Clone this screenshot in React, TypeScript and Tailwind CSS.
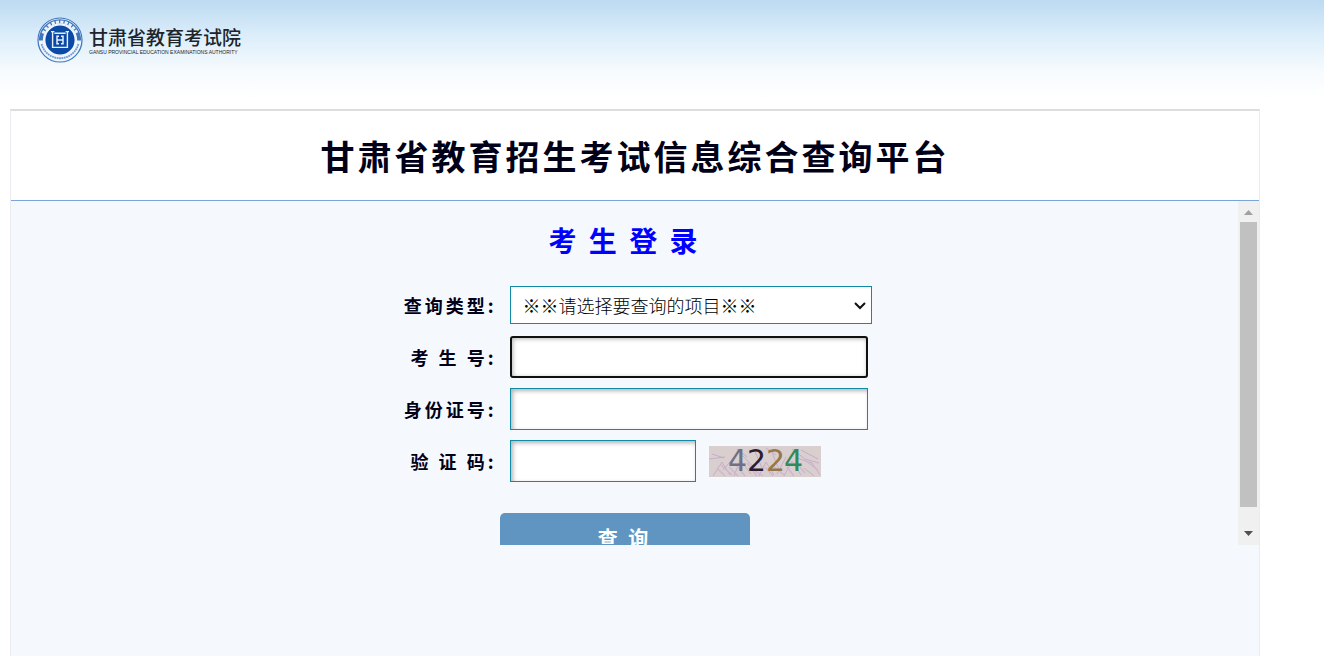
import { useState } from 'react';
import type { FormEvent, InputHTMLAttributes, ReactNode } from 'react';

const QUERY_TYPES = ['※※请选择要查询的项目※※'];

const CAPTCHA = [
  { ch: '4', x: 19, fill: '#6d7086' },
  { ch: '2', x: 38, fill: '#2e1b2d' },
  { ch: '2', x: 57, fill: '#94784c' },
  { ch: '4', x: 75, fill: '#2f8a5c' },
];

function Emblem() {
  return (
    <svg viewBox="0 0 46 46" className="h-[46px] w-[46px] shrink-0" aria-hidden="true">
      <circle cx="23" cy="23" r="22" fill="#eef5fc" stroke="#3f76bd" strokeWidth="1.2" />
      <path d="M3.8 23.5A19.2 19.2 0 1 1 42.2 23.5" fill="none" stroke="#3f76bd" strokeWidth="4" />
      <path d="M6 16.5A18.3 18.3 0 0 1 40 16.5" fill="none" stroke="#eaf2fb" strokeWidth="3" strokeDasharray="3.2 1.2" />
      <path d="M4.6 27A19 19 0 0 0 41.4 27" fill="none" stroke="#6f9bd2" strokeWidth="1.8" strokeDasharray="1.8 .6" />
      <circle cx="23" cy="23" r="15.2" fill="#0b4ba6" stroke="#f4f9fe" strokeWidth="1.2" />
      <path d="M15.6 14v16.4h14.8V14M14 14.6h3.4M28.6 14.6h3.4M17.4 16.2h11.2" fill="none" stroke="#e6effa" strokeWidth="1.4" />
      <path d="M20 18.6v8.8M26 18.6v8.8M20 23h6M20 19.2h2M26 19.2h-2M20 26.8h2M26 26.8h-2" fill="none" stroke="#e6effa" strokeWidth="1.5" />
    </svg>
  );
}

function Captcha() {
  return (
    <svg viewBox="0 0 112 31" className="h-[31px] w-28 overflow-visible" role="img" aria-label="4224">
      <rect width="112" height="31" fill="#dacfcf" />
      <path d="M0 13l16-2M3 8l12 4M4 30l9-14 8 13M14 24l12-14M25 30l6-16 11 14M34 10l14 15M45 3l8 19M50 30l7-14 8 13M62 4l9 22M68 28l9-17M75 30l8-15 9 14M83 3l13 10 14 4M88 12l15 5 8 12M92 4l17 9M95 22l10 8" fill="none" stroke="#c2a4c5" strokeWidth=".8" />
      <path d="M8 22l8 8M12 19l11 10M20 21l9 9M28 20l8 10M38 17l10 13M42 22l12 8M56 21l8 9M64 20l11 9M78 21l7 9M90 20l6 7M97 15l12 9M28 3l10 8M57 2l10 7" fill="none" stroke="#cdb6d0" strokeWidth="1.4" />
      {CAPTCHA.map((c) => (
        <text key={c.x} x={c.x} y="25" fill={c.fill} fontSize="30" className="font-['DejaVu_Sans']">{c.ch}</text>
      ))}
    </svg>
  );
}

function Row({ id, label, children }: { id: string; label: string; children: ReactNode }) {
  return (
    <div className="flex h-[42px] items-center gap-[13px]">
      <label htmlFor={id} className="w-[119px] shrink-0 text-right text-lg font-bold tracking-[3px] text-[#000018]">{label}</label>
      {children}
    </div>
  );
}

function TextBox({ className, ...props }: InputHTMLAttributes<HTMLInputElement>) {
  return (
    <input
      type="text"
      {...props}
      className={`h-[42px] border border-[#0f8ba5] bg-white px-3 text-lg shadow-[inset_2px_2px_4px_rgba(0,0,0,0.3)] outline-none focus:rounded-[3px] focus:border-2 focus:border-[#101010] focus:shadow-[inset_1px_1px_4px_rgba(0,0,0,0.3)] ${className}`}
    />
  );
}

function ScrollBar() {
  return (
    <div className="flex w-[21px] shrink-0 flex-col items-center bg-[#f0f0f0]" aria-hidden="true">
      <svg viewBox="0 0 17 21" className="h-[21px] w-[17px]"><path d="M4 14l4.5-5 4.5 5z" fill="#a0a0a0" /></svg>
      <div className="w-[17px] flex-1 bg-[#c1c1c1]" />
      <svg viewBox="0 0 17 38" className="h-[38px] w-[17px]"><path d="M4 24h9l-4.5 5z" fill="#505050" /></svg>
    </div>
  );
}

export default function App() {
  const [type, setType] = useState(QUERY_TYPES[0]);
  const submit = (e: FormEvent) => e.preventDefault();

  return (
    <div className="flex min-h-screen flex-col bg-white bg-[linear-gradient(#bcdaf1,#dceefa_36px,#f7fbfe_72px,#fff_100px)] font-['Noto_Sans_CJK_SC',sans-serif]">
      <header className="flex h-[109px] items-start px-[37px] pt-[17px]">
        <a href="#" className="flex items-center gap-1.5 text-[#20242a]">
          <Emblem />
          <span className="flex flex-col">
            <span className="text-[19px] leading-6 font-medium">甘肃省教育考试院</span>
            <span className="font-['Liberation_Sans',sans-serif] text-[5px] leading-[6px] whitespace-nowrap">GANSU PROVINCIAL EDUCATION EXAMINATIONS AUTHORITY</span>
          </span>
        </a>
      </header>

      <main className="mr-16 ml-2.5 flex flex-1 flex-col border-x border-t-2 border-x-[#ececf0] border-t-[#dddddd] bg-[#f5f9fe]">
        <div className="flex h-[90px] items-center justify-center border-b border-[#79a5d8] bg-white">
          <h1 className="text-[34px] leading-[48px] font-bold tracking-[3px] text-[#000018]">甘肃省教育招生考试信息综合查询平台</h1>
        </div>

        <div className="flex h-[344px] overflow-hidden">
          <form onSubmit={submit} className="flex flex-1 flex-col items-center pt-[19px]">
            <h2 className="text-[28px] leading-10 font-bold tracking-[3px] text-[#0000ff]">考 生 登 录</h2>
            <div className="mt-6 flex w-[494px] flex-col gap-2.5">
              <Row id="type" label="查询类型:">
                <div className="relative">
                  <select
                    id="type"
                    value={type}
                    onChange={(e) => setType(e.target.value)}
                    className="h-[38px] w-[362px] appearance-none border border-[#0f8ba5] bg-white px-3 text-lg leading-7 font-light text-black outline-none"
                  >
                    {QUERY_TYPES.map((t) => <option key={t}>{t}</option>)}
                  </select>
                  <svg viewBox="0 0 12 8" className="pointer-events-none absolute top-4 right-1.5 h-2 w-3"><path d="M1 1l5 5 5-5" fill="none" stroke="#101010" strokeWidth="2" /></svg>
                </div>
              </Row>
              <Row id="number" label="考 生 号:">
                <TextBox id="number" autoFocus className="w-[358px] caret-transparent" />
              </Row>
              <Row id="idcard" label="身份证号:">
                <TextBox id="idcard" className="w-[358px]" />
              </Row>
              <Row id="code" label="验 证 码:">
                <TextBox id="code" className="w-[186px]" />
                <Captcha />
              </Row>
            </div>
            <button type="submit" className="mt-[31px] h-[50px] w-[250px] shrink-0 rounded-[5px] bg-[#6095c2] text-xl font-bold tracking-[3px] text-white">查 询</button>
          </form>
          <ScrollBar />
        </div>
      </main>
    </div>
  );
}
